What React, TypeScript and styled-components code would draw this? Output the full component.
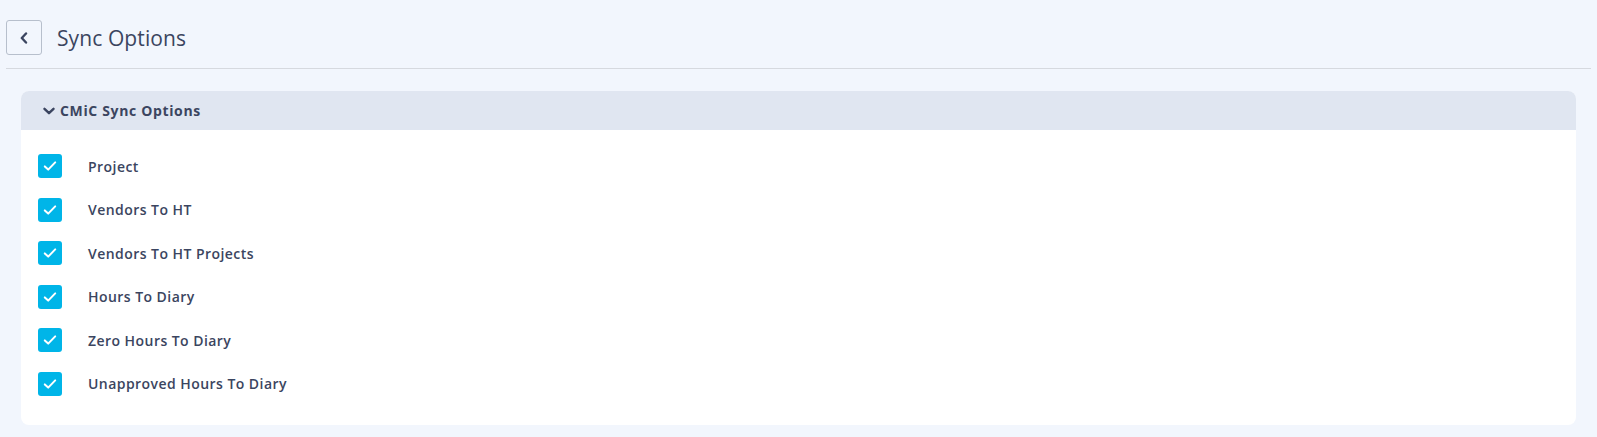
import { useState, type FunctionComponent } from 'react';
import styled, { createGlobalStyle } from 'styled-components';

const GlobalStyle = createGlobalStyle`
  html, body {
    margin: 0;
    padding: 0;
    background: #f2f6fd;
  }
  body {
    font-family: "Open Sans", "Noto Sans", sans-serif;
    color: #3b4560;
  }
`;

const Page = styled.div`
  padding: 0 6px 0 6px;
  min-height: 437px;
  box-sizing: border-box;
`;

const TopBar = styled.div`
  display: flex;
  align-items: center;
  gap: 15px;
  padding: 20px 0 13px;
  border-bottom: 1px solid #d6d9df;
`;

const BackButton = styled.button`
  width: 36px;
  height: 35px;
  display: flex;
  align-items: center;
  justify-content: center;
  background: transparent;
  border: 1px solid #b7bfcc;
  border-radius: 3px;
  padding: 0;
  cursor: pointer;
  color: #3b4560;
`;

const Title = styled.h1`
  margin: 0;
  font-size: 21px;
  font-weight: 400;
  letter-spacing: 0.1px;
  color: #3b4560;
`;

const Body = styled.div`
  padding: 22px 15px 0;
`;

const Card = styled.section`
  background: #ffffff;
  border-radius: 8px;
  overflow: hidden;
`;

const CardHeader = styled.button`
  width: 100%;
  height: 39px;
  display: flex;
  align-items: center;
  gap: 5px;
  padding: 0 0 0 22px;
  background: #e0e6f1;
  border: none;
  font-family: inherit;
  font-size: 14px;
  font-weight: 700;
  letter-spacing: 0.65px;
  color: #3b4560;
  cursor: pointer;
  text-align: left;
`;

const OptionList = styled.ul`
  list-style: none;
  margin: 0;
  padding: 24px 0 29px 17px;
  display: flex;
  flex-direction: column;
  gap: 19.6px;
`;

const OptionRow = styled.li`
  display: flex;
  align-items: center;
  gap: 26px;
  height: 24px;
`;

const Box = styled.span<{ $checked: boolean }>`
  width: 24px;
  height: 24px;
  border-radius: 3px;
  display: flex;
  align-items: center;
  justify-content: center;
  background: ${(p) => (p.$checked ? '#00b5e8' : '#ffffff')};
  border: ${(p) => (p.$checked ? 'none' : '1px solid #b7bfcc')};
  box-sizing: border-box;
  cursor: pointer;
`;

const Label = styled.span`
  font-size: 14px;
  font-weight: 600;
  letter-spacing: 0.45px;
  color: #3b4560;
`;

const options = [
    'Project',
    'Vendors To HT',
    'Vendors To HT Projects',
    'Hours To Diary',
    'Zero Hours To Diary',
    'Unapproved Hours To Diary',
];

const App: FunctionComponent = () => {
    const [checked, setChecked] = useState<boolean[]>(options.map(() => true));
    const [open, setOpen] = useState(true);

    return (
        <>
            <GlobalStyle />
            <Page>
                <TopBar>
                    <BackButton aria-label="Back">
                        <svg width="10" height="12" viewBox="0 0 10 12">
                            <path d="M7 1.5L2.8 6L7 10.5" fill="none" stroke="currentColor" strokeWidth="2.4" strokeLinecap="round" strokeLinejoin="round" />
                        </svg>
                    </BackButton>
                    <Title>Sync Options</Title>
                </TopBar>
                <Body>
                    <Card>
                        <CardHeader onClick={() => setOpen(!open)}>
                            <svg width="12" height="10" viewBox="0 0 12 10" style={{ transform: open ? 'none' : 'rotate(-90deg)' }}>
                                <path d="M1.5 2.8L6 7.2L10.5 2.8" fill="none" stroke="currentColor" strokeWidth="2.4" strokeLinecap="round" strokeLinejoin="round" />
                            </svg>
                            CMiC Sync Options
                        </CardHeader>
                        {open && <OptionList>
                            {options.map((option, i) =>
                                <OptionRow key={i}>
                                    <Box $checked={checked[i]} onClick={() => setChecked(checked.map((c, j) => (j === i ? !c : c)))}>
                                        {checked[i] && <svg width="14" height="12" viewBox="0 0 14 12">
                                            <path d="M1.8 6.4L5.2 9.6L12.2 2.4" fill="none" stroke="#ffffff" strokeWidth="2" strokeLinecap="round" strokeLinejoin="round" />
                                        </svg>}
                                    </Box>
                                    <Label>{option}</Label>
                                </OptionRow>
                            )}
                        </OptionList>}
                    </Card>
                </Body>
            </Page>
        </>
    );
};

export default App;
